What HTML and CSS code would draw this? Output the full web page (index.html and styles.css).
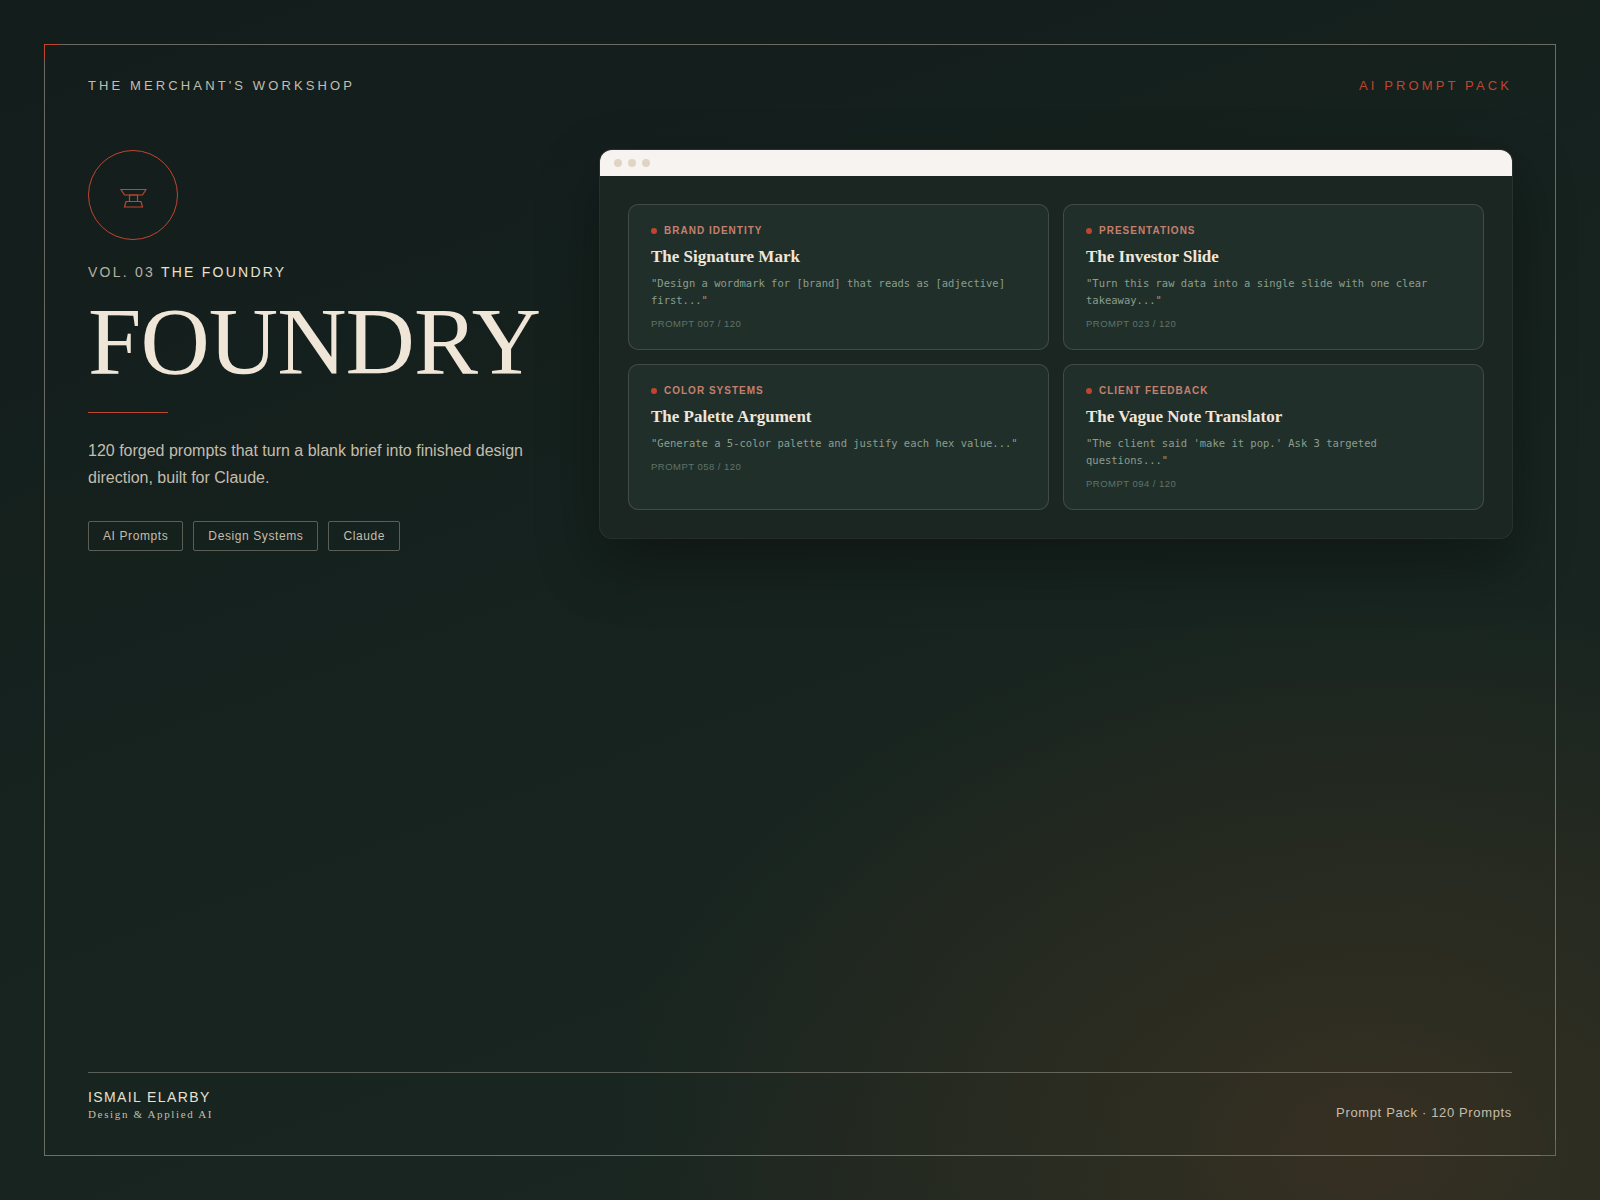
FILE: index.html
```html
<!DOCTYPE html>
<html lang="en">
<head>
  <meta charset="UTF-8">
  <title>Foundry - AI Prompt Pack</title>
  <link rel="stylesheet" href="styles.css">
</head>
<body>
  <div class="cover">
    <div class="frame"></div>

    <header class="top-bar">
      <span class="shop">THE MERCHANT'S WORKSHOP</span>
      <span class="pack">AI PROMPT PACK</span>
    </header>

    <main class="hero">
      <section class="intro">
        <div class="seal">
          <svg width="28" height="28" viewBox="0 0 28 28" fill="none" stroke="#c0452f" stroke-width="1.2">
            <path d="M2 8.5H27L23.5 14H5.5Z"/>
            <path d="M10.5 14H18.5V20.5H10.5Z"/>
            <path d="M7 20.5H22L23.5 26H5.5Z"/>
          </svg>
        </div>
        <p class="vol">VOL. 03 <span>THE FOUNDRY</span></p>
        <h1>FOUNDRY</h1>
        <div class="rule"></div>
        <p class="lead">120 forged prompts that turn a blank brief into finished design direction, built for Claude.</p>
        <div class="tags">
          <span class="tag">AI Prompts</span>
          <span class="tag">Design Systems</span>
          <span class="tag">Claude</span>
        </div>
      </section>

      <section class="window">
        <div class="window-bar">
          <i></i><i></i><i></i>
        </div>
        <div class="prompts">
          <article class="card">
            <div class="cat">BRAND IDENTITY</div>
            <h2>The Signature Mark</h2>
            <p class="quote">"Design a wordmark for [brand] that reads as [adjective] first..."</p>
            <div class="num">PROMPT 007 / 120</div>
          </article>
          <article class="card">
            <div class="cat">PRESENTATIONS</div>
            <h2>The Investor Slide</h2>
            <p class="quote">"Turn this raw data into a single slide with one clear takeaway..."</p>
            <div class="num">PROMPT 023 / 120</div>
          </article>
          <article class="card">
            <div class="cat">COLOR SYSTEMS</div>
            <h2>The Palette Argument</h2>
            <p class="quote">"Generate a 5-color palette and justify each hex value..."</p>
            <div class="num">PROMPT 058 / 120</div>
          </article>
          <article class="card">
            <div class="cat">CLIENT FEEDBACK</div>
            <h2>The Vague Note Translator</h2>
            <p class="quote">"The client said 'make it pop.' Ask 3 targeted questions..."</p>
            <div class="num">PROMPT 094 / 120</div>
          </article>
        </div>
      </section>
    </main>

    <footer class="bottom-bar">
      <div>
        <div class="author">ISMAIL ELARBY</div>
        <div class="role">Design &amp; Applied AI</div>
      </div>
      <div class="count">Prompt Pack · 120 Prompts</div>
    </footer>
  </div>
</body>
</html>
```

FILE: styles.css
```css
* {
  box-sizing: border-box;
}

body {
  margin: 0;
  background: #141f1e;
  font-family: 'Liberation Sans', Arial, sans-serif;
}

.cover {
  position: relative;
  width: 1600px;
  height: 1200px;
  padding: 44px 88px 0;
  display: flex;
  flex-direction: column;
  overflow: hidden;
  background:
    radial-gradient(ellipse 760px 560px at 85% 95%, rgba(125, 72, 36, 0.28) 0%, rgba(125, 72, 36, 0) 100%),
    linear-gradient(160deg, #131d1c 0%, #17241f 60%, #1b2722 100%);
}

/* thin outer frame with the two red corners */
.frame {
  position: absolute;
  top: 44px;
  left: 44px;
  right: 44px;
  bottom: 44px;
  border: 1px solid rgba(232, 224, 208, 0.4);
}

.frame::before,
.frame::after {
  content: '';
  position: absolute;
  width: 15px;
  height: 15px;
}

.frame::before {
  top: -1px;
  left: -1px;
  border-top: 1px solid #c0452f;
  border-left: 1px solid #c0452f;
}

.frame::after {
  right: -1px;
  bottom: -1px;
  border-right: 1px solid #c0452f;
  border-bottom: 1px solid #c0452f;
}

.top-bar {
  display: flex;
  justify-content: space-between;
  align-items: center;
  margin-top: 33px;
  height: 16px;
  font-size: 13px;
  letter-spacing: 0.24em;
}

.shop {
  color: #c4bdac;
}

.pack {
  color: #c0452f;
}

.hero {
  display: grid;
  grid-template-columns: 1fr 912px;
  gap: 48px;
  align-items: start;
  margin-top: 57px;
}

.seal {
  width: 90px;
  height: 90px;
  border: 1px solid #c0452f;
  border-radius: 50%;
  display: flex;
  align-items: center;
  justify-content: center;
}

.vol {
  margin: 23px 0 0;
  font-size: 14px;
  line-height: 18px;
  letter-spacing: 0.16em;
  color: #b5b1a1;
}

.vol span {
  color: #e8e0d0;
}

h1 {
  margin: 13px 0 0;
  font-family: 'Liberation Serif', 'Times New Roman', serif;
  font-weight: 400;
  font-size: 96px;
  line-height: 1;
  letter-spacing: -0.01em;
  color: #f0e6d8;
}

.rule {
  width: 80px;
  height: 1px;
  margin-top: 22px;
  background: #c0452f;
}

.lead {
  margin: 24px 0 0;
  font-size: 16px;
  line-height: 1.7;
  color: #c4bdac;
}

.tags {
  display: flex;
  gap: 10px;
  margin-top: 30px;
}

.tag {
  padding: 0 14px;
  height: 30px;
  line-height: 28px;
  font-size: 12px;
  letter-spacing: 0.05em;
  color: #c4bdac;
  border: 1px solid rgba(232, 224, 208, 0.32);
  border-radius: 2px;
}

.window {
  background: #1b2623;
  border-radius: 12px;
  overflow: hidden;
  box-shadow: 0 0 0 1px rgba(232, 224, 208, 0.1), 0 24px 60px rgba(0, 0, 0, 0.35);
}

.window-bar {
  height: 26px;
  padding: 0 14px;
  display: flex;
  align-items: center;
  gap: 6px;
  background: #f7f3f0;
}

.window-bar i {
  width: 8px;
  height: 8px;
  border-radius: 50%;
  background: #e0d5c3;
}

.prompts {
  display: grid;
  grid-template-columns: 1fr 1fr;
  gap: 14px;
  padding: 28px;
}

.card {
  height: 146px;
  padding: 20px 22px;
  background: #212f2b;
  border: 1px solid rgba(232, 224, 208, 0.16);
  border-radius: 10px;
}

.cat {
  position: relative;
  padding-left: 13px;
  font-size: 10px;
  line-height: 12px;
  font-weight: 700;
  letter-spacing: 0.1em;
  color: #c4806e;
}

.cat::before {
  content: '';
  position: absolute;
  left: 0;
  top: 3px;
  width: 6px;
  height: 6px;
  border-radius: 50%;
  background: #c0452f;
}

h2 {
  margin: 10px 0 0;
  font-family: 'Liberation Serif', 'Times New Roman', serif;
  font-size: 17px;
  line-height: 20px;
  font-weight: 700;
  color: #f0e6d8;
}

.quote {
  margin: 8px 0 0;
  font-family: 'DejaVu Sans Mono', monospace;
  font-size: 10.5px;
  line-height: 1.6;
  color: #8a9e8c;
}

.num {
  margin-top: 9px;
  font-size: 9.5px;
  line-height: 12px;
  letter-spacing: 0.05em;
  color: #5f7468;
}

.bottom-bar {
  position: absolute;
  left: 88px;
  right: 88px;
  bottom: 78px;
  height: 50px;
  padding: 14px 0 1px;
  display: flex;
  justify-content: space-between;
  align-items: flex-end;
  border-top: 1px solid rgba(232, 224, 208, 0.32);
}

.author {
  font-size: 14px;
  line-height: 18px;
  letter-spacing: 0.1em;
  color: #e8e0d0;
}

.role {
  margin-top: 1px;
  font-family: 'Liberation Serif', 'Times New Roman', serif;
  font-size: 11px;
  line-height: 14px;
  letter-spacing: 0.15em;
  color: #c4bdac;
}

.count {
  font-size: 13px;
  line-height: 16px;
  letter-spacing: 0.05em;
  color: #c4bdac;
}
```
